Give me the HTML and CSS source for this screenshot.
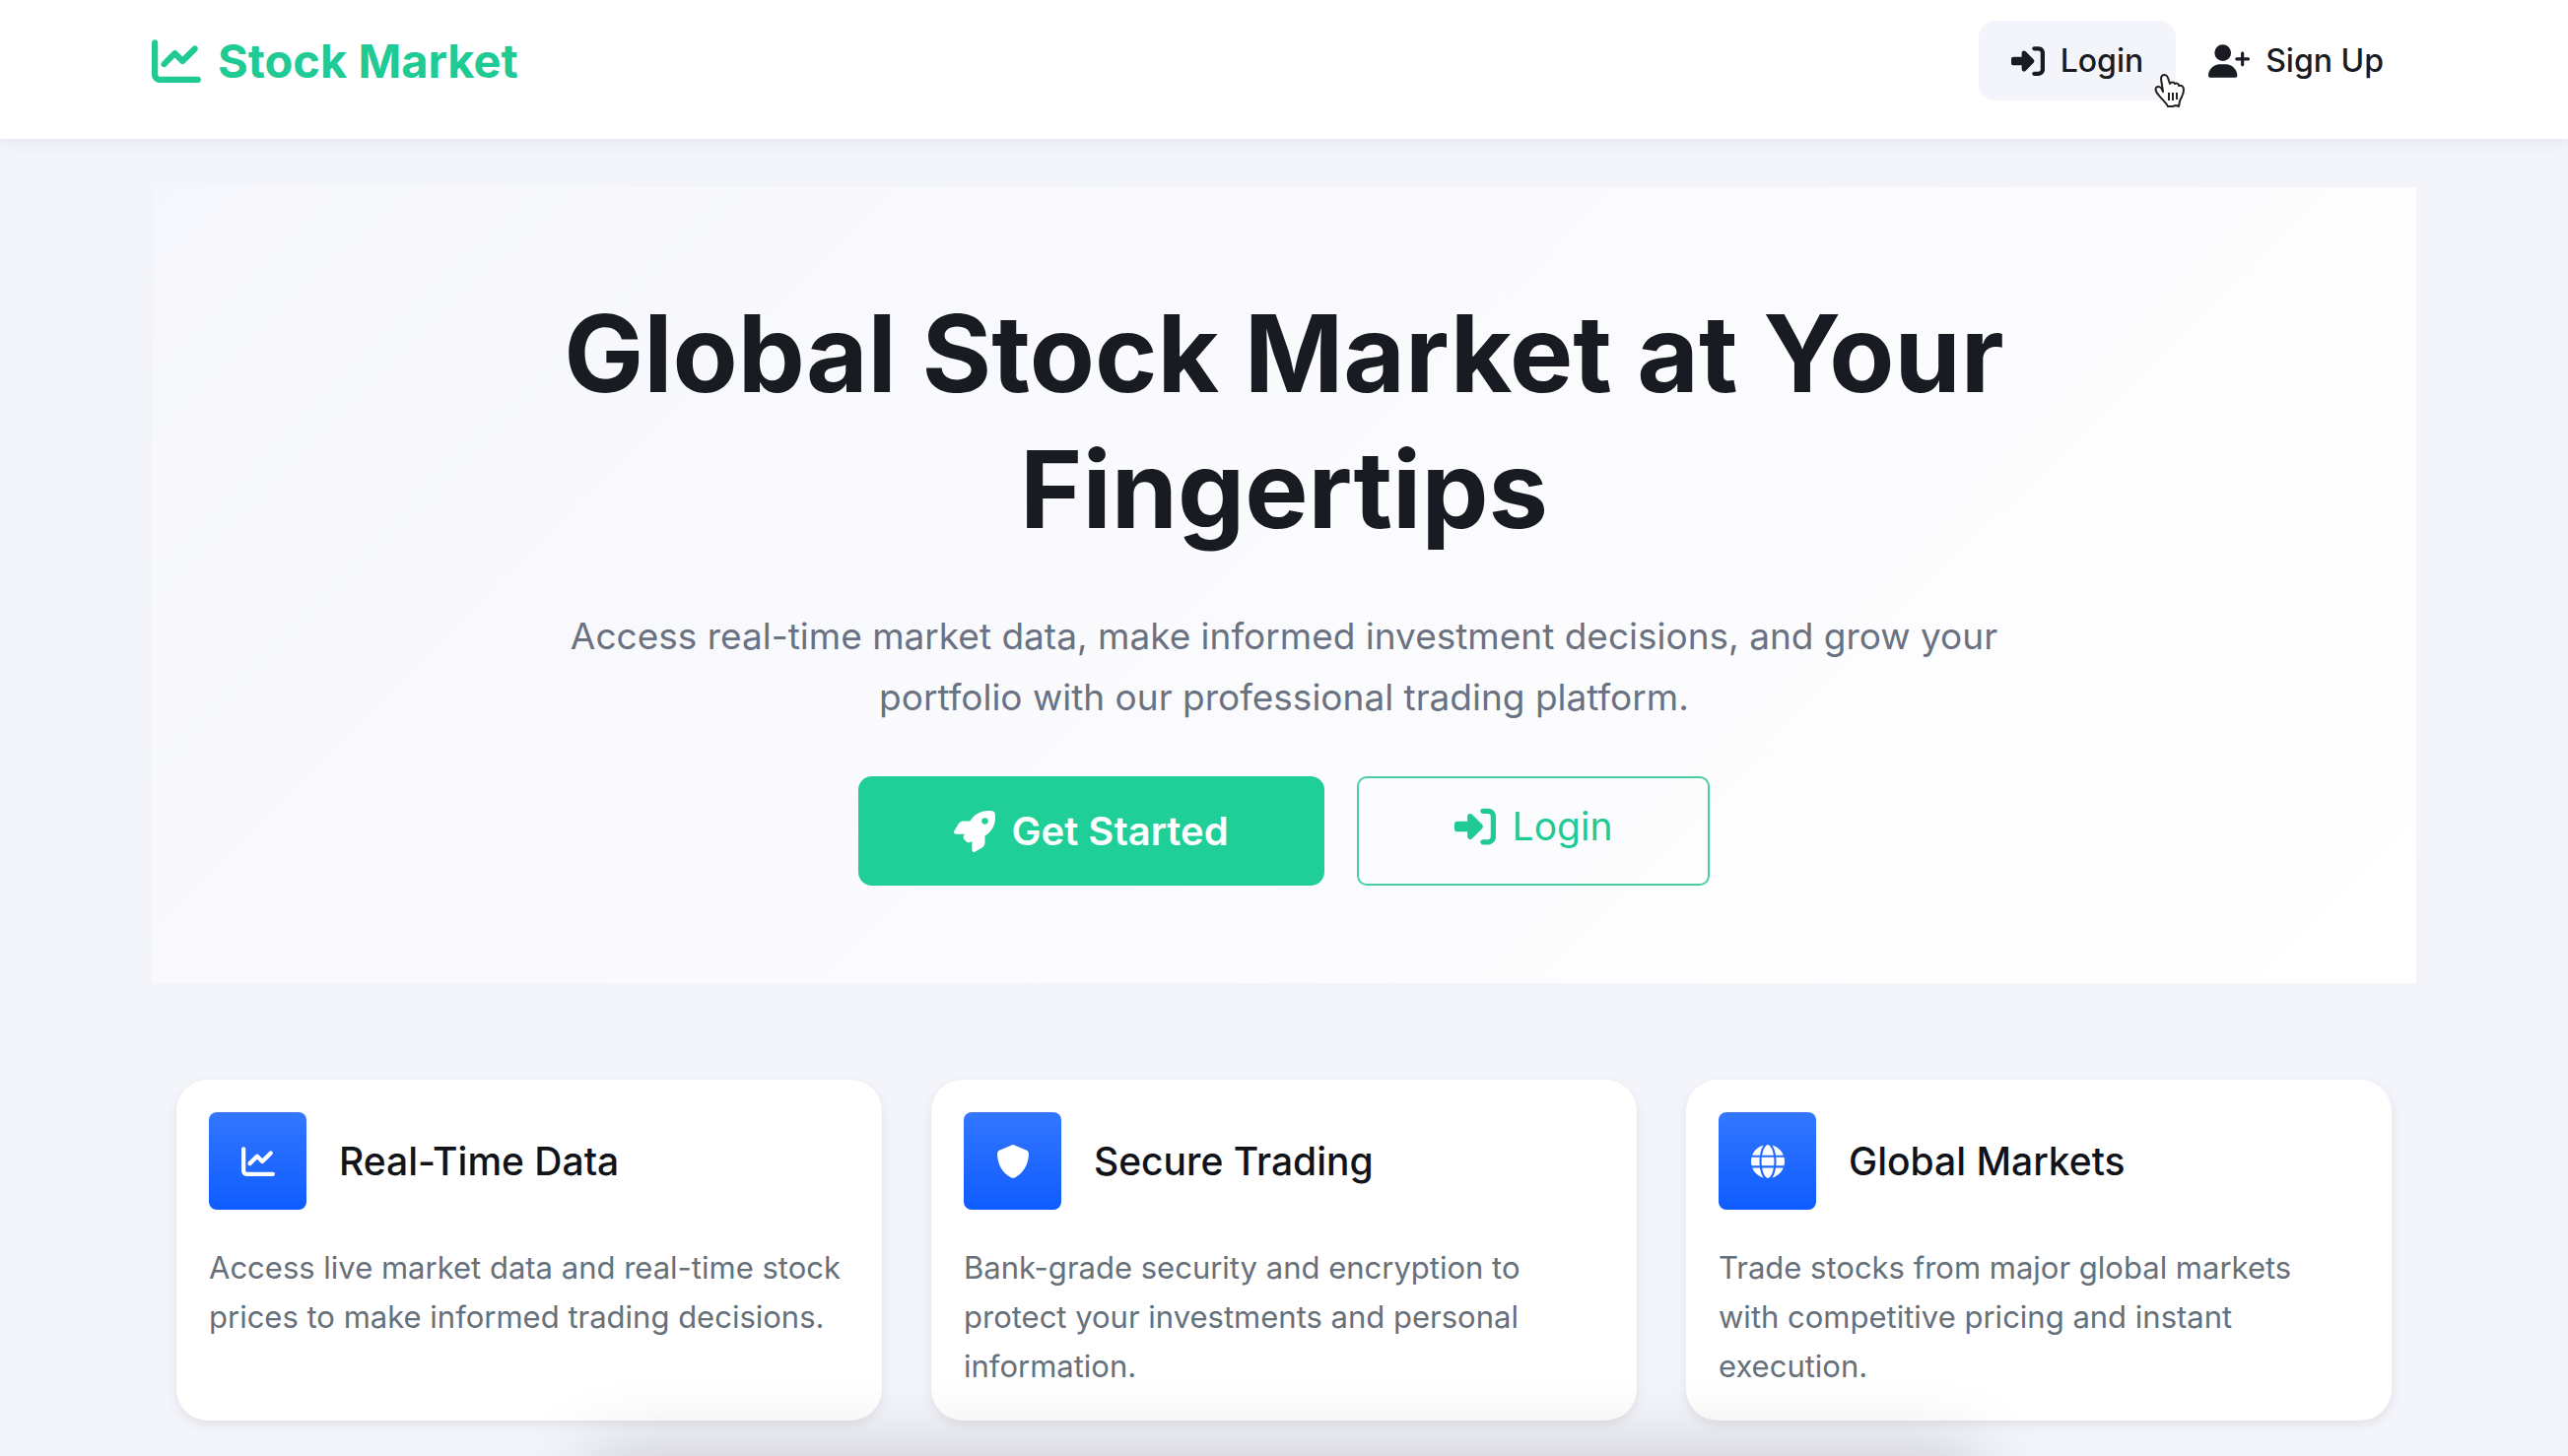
FILE: index.html
```html
<!DOCTYPE html>
<html lang="en">
<head>
<meta charset="utf-8">
<meta name="viewport" content="width=device-width, initial-scale=1">
<title>Stock Market</title>
<link rel="stylesheet" href="styles.css">
</head>
<body>
<svg class="sprite" aria-hidden="true">
  <symbol id="chart" viewBox="0 0 512 512"><path d="M64 64c0-17.700-14.300-32-32-32S0 46.300 0 64V400c0 44.200 35.800 80 80 80H480c17.700 0 32-14.300 32-32s-14.300-32-32-32H80c-8.800 0-16-7.200-16-16V64zm406.600 86.600c12.500-12.500 12.500-32.800 0-45.300s-32.800-12.500-45.300 0L320 210.700l-57.400-57.400c-12.500-12.500-32.800-12.500-45.300 0l-112 112c-12.500 12.500-12.500 32.800 0 45.300s32.800 12.500 45.300 0L240 221.300l57.400 57.400c12.500 12.500 32.800 12.500 45.300 0l128-128z"/></symbol>
  <symbol id="enter" viewBox="0 0 512 512"><path d="M217.900 105.900L340.700 228.700c7.200 7.200 11.300 17.100 11.300 27.300s-4.100 20.100-11.300 27.300L217.900 406.100c-6.400 6.400-15 9.900-24 9.900c-18.700 0-33.900-15.200-33.900-33.900l0-62.100L32 320c-17.700 0-32-14.300-32-32l0-64c0-17.700 14.300-32 32-32l128 0 0-62.100c0-18.700 15.200-33.900 33.900-33.900c9 0 17.600 3.600 24 9.900zM352 416l64 0c17.700 0 32-14.300 32-32l0-256c0-17.700-14.300-32-32-32l-64 0c-17.700 0-32-14.300-32-32s14.300-32 32-32l64 0c53 0 96 43 96 96l0 256c0 53-43 96-96 96l-64 0c-17.700 0-32-14.300-32-32s14.300-32 32-32z"/></symbol>
  <symbol id="user-plus" viewBox="0 0 640 512"><path d="M96 128a128 128 0 1 1 256 0A128 128 0 1 1 96 128zM0 482.300C0 383.800 79.800 304 178.300 304h91.400C368.200 304 448 383.800 448 482.300c0 16.400-13.300 29.700-29.700 29.700H29.700C13.300 512 0 498.700 0 482.300zM504 312V248H440c-13.300 0-24-10.700-24-24s10.700-24 24-24h64V136c0-13.300 10.700-24 24-24s24 10.700 24 24v64h64c13.300 0 24 10.700 24 24s-10.700 24-24 24H552v64c0 13.300-10.700 24-24 24s-24-10.700-24-24z"/></symbol>
  <symbol id="rocket" viewBox="0 0 512 512"><path d="M156.600 384.900L125.700 354c-8.500-8.500-11.500-20.800-7.700-32.200c3-8.900 7-20.500 11.800-33.800L24 288c-8.600 0-16.600-4.600-20.900-12.100s-4.200-16.700 .2-24.100l52.500-88.500c13-21.900 36.500-35.300 61.900-35.300l82.300 0c2.400-4 4.800-7.700 7.200-11.300C289.100-4.100 411.100-8.100 483.900 5.300c11.600 2.100 20.600 11.200 22.800 22.800c13.400 72.900 9.300 194.800-111.400 276.700c-3.500 2.400-7.300 4.800-11.300 7.200v82.300c0 25.400-13.400 49-35.300 61.900l-88.500 52.500c-7.400 4.400-16.600 4.500-24.100 .2s-12.100-12.200-12.100-20.900V380.800c-14.100 4.900-26.400 8.900-35.700 11.900c-11.200 3.600-23.400 .5-31.800-7.800zM384 168a40 40 0 1 0 0-80 40 40 0 1 0 0 80z"/></symbol>
  <symbol id="shield" viewBox="0 0 512 512"><path d="M256 0c4.600 0 9.200 1 13.400 2.900L457.700 82.800c22 9.300 38.400 31 38.300 57.200c-.5 99.200-41.300 280.700-213.600 363.200c-16.700 8-36.100 8-52.800 0C57.300 420.700 16.500 239.200 16 140c-.1-26.200 16.300-47.900 38.300-57.200L242.700 2.900C246.800 1 251.400 0 256 0z"/></symbol>
  <symbol id="globe" viewBox="0 0 512 512"><path d="M352 256c0 22.200-1.200 43.600-3.300 64H163.300c-2.200-20.400-3.300-41.800-3.300-64s1.200-43.600 3.300-64H348.700c2.200 20.400 3.300 41.800 3.300 64zm28.800-64H503.900c5.300 20.500 8.100 41.900 8.100 64s-2.800 43.500-8.100 64H380.800c2.100-20.600 3.200-42 3.200-64s-1.100-43.400-3.200-64zm112.600-32H376.700c-10-63.900-29.800-117.400-55.300-151.600c78.300 20.700 142 77.500 171.900 151.600zm-149.100 0H167.700c6.100-36.400 15.500-68.600 27-94.700c10.500-23.600 22.200-40.700 33.500-51.500C239.400 3.200 248.700 0 256 0s16.600 3.200 27.800 13.800c11.300 10.800 23 27.900 33.500 51.500c11.600 26 20.900 58.200 27 94.700zm-209 0H18.600C48.600 85.900 112.200 29.100 190.600 8.400C165.100 42.600 145.300 96.100 135.300 160zM8.100 192H131.200c-2.100 20.600-3.200 42-3.200 64s1.100 43.400 3.200 64H8.100C2.800 299.500 0 278.100 0 256s2.800-43.500 8.100-64zM194.700 446.600c-11.600-26-20.900-58.200-27-94.600H344.300c-6.100 36.400-15.500 68.600-27 94.600c-10.500 23.600-22.200 40.700-33.500 51.500C272.600 508.800 263.300 512 256 512s-16.600-3.200-27.800-13.800c-11.300-10.800-23-27.900-33.500-51.500zM135.300 352c10 63.900 29.800 117.400 55.300 151.600C112.200 482.900 48.600 426.100 18.600 352H135.300zm358.100 0c-30 74.100-93.600 130.900-171.900 151.600c25.500-34.200 45.200-87.700 55.300-151.600H493.400z"/></symbol>
</svg>

<header class="header">
  <a class="brand" href="#"><svg class="brand-icon" aria-hidden="true"><use href="#chart"/></svg>Stock Market</a>
  <nav class="nav">
    <a class="nav-link nav-link-active" href="#login"><svg class="nav-icon" aria-hidden="true"><use href="#enter"/></svg>Login
      <svg class="pointer" viewBox="0 0 32 36" aria-hidden="true"><path d="M8 3c2-2 5-1 6 2l2 6c1-2 4-2 5 0c2-1 4 0 4 2c3-1 5 1 5 4c0 6-3 8-4 12l-1 5l-3-1l-3 1H14c-2-4-6-7-9-11c-3-3-4-6-3-8c2-2 5-1 6 2l1 2L7 6c0-1 0-2 1-3z"/><path d="M15 20v8M19 20v8M23 20v7"/></svg></a>
    <a class="nav-link" href="#signup"><svg class="nav-icon nav-icon-wide" aria-hidden="true"><use href="#user-plus"/></svg>Sign Up</a>
  </nav>
</header>

<main class="main">
  <section class="hero">
    <h1 class="hero-title">Global Stock Market at Your Fingertips</h1>
    <p class="hero-text">Access real-time market data, make informed investment decisions, and grow your portfolio with our professional trading platform.</p>
    <div class="actions">
      <a class="btn btn-primary" href="#signup"><svg class="btn-icon" aria-hidden="true"><use href="#rocket"/></svg>Get Started</a>
      <a class="btn btn-outline" href="#login"><svg class="btn-icon" aria-hidden="true"><use href="#enter"/></svg>Login</a>
    </div>
  </section>

  <section class="features">
    <article class="card">
      <div class="card-head"><span class="tile"><svg class="tile-icon" aria-hidden="true"><use href="#chart"/></svg></span><h2 class="card-title">Real-Time Data</h2></div>
      <p class="card-text">Access live market data and real-time stock prices to make informed trading decisions.</p>
    </article>
    <article class="card">
      <div class="card-head"><span class="tile"><svg class="tile-icon" aria-hidden="true"><use href="#shield"/></svg></span><h2 class="card-title">Secure Trading</h2></div>
      <p class="card-text">Bank-grade security and encryption to protect your investments and personal information.</p>
    </article>
    <article class="card">
      <div class="card-head"><span class="tile"><svg class="tile-icon" aria-hidden="true"><use href="#globe"/></svg></span><h2 class="card-title">Global Markets</h2></div>
      <p class="card-text">Trade stocks from major global markets with competitive pricing and instant execution.</p>
    </article>
  </section>
</main>
<div class="dock-shadow"></div>
</body>
</html>
```
FILE: styles.css
```css
* { box-sizing: border-box; }

body {
  margin: 0;
  min-height: 100vh;
  background: #f4f5fb;
  color: #191b22;
  font-family: Inter, "Liberation Sans", sans-serif;
  font-size: 32px;
}

h1, h2, p { margin: 0; }
a { color: inherit; text-decoration: none; }
svg { fill: currentColor; flex: none; }
.sprite { position: absolute; width: 0; height: 0; }

.header {
  display: flex;
  justify-content: space-between;
  align-items: center;
  padding: 21px 154px 39px;
  background: #fff;
  box-shadow: 0 2px 16px rgba(0, 0, 0, 0.08);
}

.brand {
  display: flex;
  align-items: center;
  gap: 17px;
  color: #20ca95;
  font-size: 47px;
  font-weight: 700;
}
.brand-icon { width: 50px; height: 50px; }

.nav { display: flex; }
.nav-link {
  position: relative;
  display: flex;
  align-items: center;
  gap: 16px;
  height: 81px;
  padding: 0 33px;
  border-radius: 16px;
  font-weight: 500;
}
.nav-link-active { background: #f4f5fb; }
.nav-icon { width: 34px; height: 34px; }
.nav-icon-wide { width: 42px; }

.pointer {
  position: absolute;
  right: -10px;
  bottom: -8px;
  width: 32px;
  height: 36px;
  fill: #fff;
  stroke: #222;
  stroke-width: 2;
  stroke-linejoin: round;
}

.main { padding: 49px 154px 0; }

.hero {
  display: flex;
  flex-direction: column;
  align-items: center;
  padding: 100px 40px 99px;
  background: linear-gradient(135deg, #f6f7fc, #fff);
  text-align: center;
}
.hero-title {
  max-width: 1500px;
  font-size: 108px;
  line-height: 138px;
  font-weight: 700;
}
.hero-text {
  max-width: 1500px;
  margin-top: 49px;
  color: #6a7282;
  font-size: 37px;
  line-height: 62px;
}

.actions { display: flex; gap: 33px; margin-top: 49px; }
.btn {
  display: flex;
  align-items: center;
  justify-content: center;
  gap: 17px;
  height: 111px;
  border-radius: 14px;
}
.btn-icon { width: 42px; height: 42px; }
.btn-primary {
  padding: 0 97px;
  background: #1fcf97;
  color: #fff;
  font-size: 40px;
  font-weight: 600;
}
.btn-outline {
  padding: 0 97px 10px;
  border: 2px solid #4bcda4;
  border-radius: 10px;
  color: #20ca95;
  font-size: 39px;
}

.features {
  display: grid;
  grid-template-columns: repeat(3, 1fr);
  gap: 50px;
  padding: 98px 25px 32px;
}
.card {
  padding: 33px 33px 30px;
  border-radius: 32px;
  background: #fff;
  box-shadow: 0 4px 12px rgba(0, 0, 0, 0.08);
}
.card-head { display: flex; align-items: center; gap: 33px; }
.tile {
  display: grid;
  place-items: center;
  width: 99px;
  height: 99px;
  border-radius: 8px;
  background: linear-gradient(#3377ff, #0f5cff);
  color: #fff;
}
.tile-icon { width: 34px; height: 34px; }
.card-title { color: #111318; font-size: 39px; font-weight: 500; }
.card-text {
  margin-top: 34px;
  color: #66707a;
  font-size: 31px;
  line-height: 50px;
}

/* Soft shade rising from the bottom edge of the window */
.dock-shadow {
  position: fixed;
  bottom: -100px;
  left: 23%;
  right: 23%;
  height: 100px;
  box-shadow: 0 0 80px 0 rgba(0, 0, 0, 0.2);
  pointer-events: none;
}
```
